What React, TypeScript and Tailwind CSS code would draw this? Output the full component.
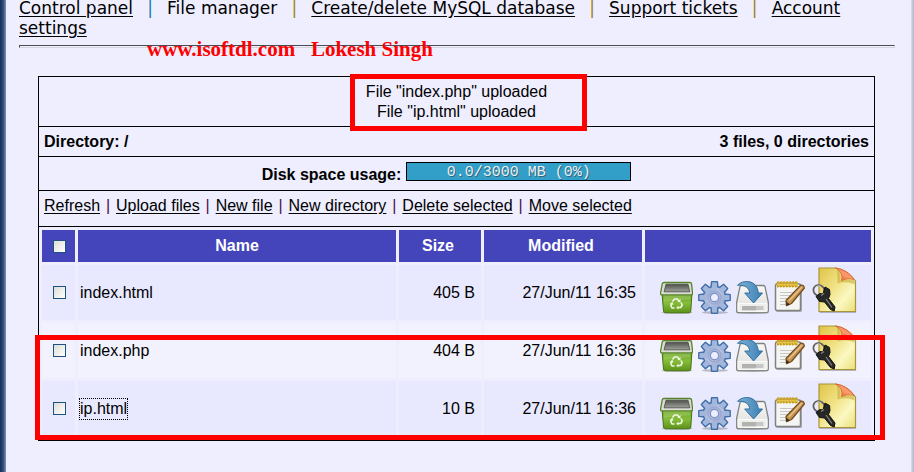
import React from "react";

function TrashIcon() {
  return (
    <svg viewBox="0 0 33 33" className="h-[33px] w-[33px]" aria-hidden="true">
      <defs>
        <linearGradient id="binBody" x1="0" y1="0" x2="0" y2="1">
          <stop offset="0" stopColor="#5f9a1c" />
          <stop offset="0.5" stopColor="#86bd3c" />
          <stop offset="1" stopColor="#5c9318" />
        </linearGradient>
        <linearGradient id="binInside" x1="0" y1="0" x2="0" y2="1">
          <stop offset="0" stopColor="#4d504b" />
          <stop offset="1" stopColor="#a0a39d" />
        </linearGradient>
      </defs>
      <ellipse cx="17" cy="31.5" rx="15.5" ry="1.3" fill="#555" opacity="0.35" />
      <path d="M2 12h30l-1.200 18q-.2 1.800-2 1.800H5.500q-1.800-.1-2-1.800z" fill="url(#binBody)" stroke="#467512" strokeWidth="1" />
      <path d="M4 1.500h26q1.200 0 1.500 1.200l1.100 9.600q0 1.600-1.500 1.600H2q-1.500 0-1.500-1.600L2.300 2.700Q2.700 1.500 4 1.500z" fill="#d9ddd3" stroke="#57832a" strokeWidth="1.300" />
      <path d="M6 3.200h22l1.800 7.600H4.100z" fill="url(#binInside)" stroke="#454941" strokeWidth="0.800" />
      <path d="M3.500 14.500h27l-.3 4Q17 18 3.800 21z" fill="#aed374" opacity="0.45" />
      <g fill="none" stroke="#eef7df" strokeWidth="1.600" strokeLinejoin="round">
        <path d="M12.500 20.500l2-2.500h3l1.500 2.500" />
        <path d="M21 21.500l1.200 2.500-1.500 2.500h-2.500" />
        <path d="M14.500 27h-2.500L10.800 24.500l1.200-2" />
      </g>
      <path d="M20.500 18v3.500l-3-1zM18.500 24.800v3.800l-2.400-1.900zM9.600 22.500l3-1.500.8 2.800z" fill="#eef7df" />
    </svg>
  );
}

function GearIcon() {
  const teeth = [0, 45, 90, 135, 180, 225, 270, 315];
  return (
    <svg viewBox="0 0 33 33" className="h-[33px] w-[33px]" aria-hidden="true">
      <defs>
        <linearGradient id="gearFill" x1="0" y1="0" x2="1" y2="1">
          <stop offset="0" stopColor="#86a5d4" />
          <stop offset="0.5" stopColor="#c2c8e2" />
          <stop offset="1" stopColor="#8b98c6" />
        </linearGradient>
      </defs>
      <ellipse cx="17" cy="31.500" rx="13" ry="1.300" fill="#555" opacity="0.35" />
      {teeth.map((a) => (
        <path key={a} d="M12.700 8L13.600 .800h5.800l.9 7.200z" fill="#9cb2d9" stroke="#416fa8" strokeWidth="1.400" strokeLinejoin="round" transform={`rotate(${a} 16.500 16.500)`} />
      ))}
      <circle cx="16.500" cy="16.500" r="11.200" fill="url(#gearFill)" stroke="#416fa8" strokeWidth="1.200" />
      {teeth.map((a) => (
        <path key={a} d="M13.700 8.500l.7-6.700h4.200l.7 6.700z" fill="#a3b6dc" transform={`rotate(${a} 16.500 16.500)`} />
      ))}
      <circle cx="16.500" cy="16.500" r="6.500" fill="none" stroke="#9aa9d2" strokeWidth="1.500" />
      <circle cx="16.500" cy="16.500" r="4.200" fill="#ededff" stroke="#7d95c6" strokeWidth="1.400" />
    </svg>
  );
}

function DownloadIcon() {
  return (
    <svg viewBox="0 0 33 33" className="h-[33px] w-[33px]" aria-hidden="true">
      <defs>
        <linearGradient id="driveTop" x1="0" y1="0" x2="0" y2="1">
          <stop offset="0" stopColor="#f8f8f7" />
          <stop offset="1" stopColor="#dcdddb" />
        </linearGradient>
        <linearGradient id="arrowFill" x1="0" y1="0" x2="1" y2="0">
          <stop offset="0" stopColor="#82b3d6" />
          <stop offset="1" stopColor="#3b7fb4" />
        </linearGradient>
      </defs>
      <ellipse cx="16.500" cy="31.800" rx="16" ry="1.100" fill="#555" opacity="0.4" />
      <path d="M5.500 4.500h22q1.200 0 1.500 1.200L32.300 21v9q0 1.700-1.700 1.700H2.400Q.7 31.700.7 30v-9L4 5.700q.3-1.200 1.500-1.200z" fill="url(#driveTop)" stroke="#80827e" strokeWidth="1.300" />
      <path d="M2 22.500h29v7.300q0 .8-.8.8H2.800q-.8 0-.8-.8z" fill="#eeeeed" stroke="#fff" strokeWidth="0.800" />
      <path d="M6 25h21.500v4H6z" fill="#c7c8c5" />
      <path d="M7 25v4.500M9 25v4.500M11 25v4.500M13 25v4.500M15 25v4.500M17 25v4.500M19 25v4.500" stroke="#969895" strokeWidth="0.900" />
      <path d="M1.500 4.300C6-1 21-2.500 22.300 12h4.200L17.600 22 8.700 12h5C13.300 7 9 3.500 1.500 4.300z" fill="url(#arrowFill)" stroke="#336f9f" strokeWidth="1" strokeLinejoin="round" />
    </svg>
  );
}

function EditIcon() {
  const rings = [4, 7, 10, 13, 16, 19, 22];
  return (
    <svg viewBox="0 0 33 33" className="h-[33px] w-[33px]" aria-hidden="true">
      <rect x="2" y="4" width="26" height="27" rx="1.500" fill="#555" opacity="0.4" />
      <rect x="1.500" y="3" width="25" height="26.500" rx="1.500" fill="#f5f5f3" stroke="#80827d" strokeWidth="1.500" />
      <path d="M6 11.500h16M6 14.500h16M6 17.500h16M6 20.500h11M6 23.500h8" stroke="#c6c7c4" strokeWidth="1.200" />
      {rings.map((x) => (
        <path key={x} d={`M${x} 6.500q-1.800-5 .2-5.600 1.800.2.600 5`} fill="none" stroke="#c99c10" strokeWidth="1.300" />
      ))}
      <path d="M3 3.500h21" stroke="#f0d04c" strokeWidth="1.500" opacity="0.800" />
      <path d="M12.500 24.800L12 19.500 26.500 4.300q3.300-1 3.900 2.700L17.500 22.500z" fill="#c49352" stroke="#734c1a" strokeWidth="1.200" strokeLinejoin="round" />
      <path d="M15 19.700L28 6" stroke="#e8c48c" strokeWidth="1.400" />
      <path d="M12.400 24.800l-.2-4.400 3.700 3.100z" fill="#3c2b19" />
    </svg>
  );
}

function PermissionIcon() {
  return (
    <svg viewBox="0 0 48 48" className="-ml-0.5 h-12 w-12" aria-hidden="true">
      <defs>
        <linearGradient id="sheet" x1="0" y1="0" x2="1" y2="1">
          <stop offset="0" stopColor="#dfc344" />
          <stop offset="0.450" stopColor="#f1e48a" />
          <stop offset="0.700" stopColor="#fbf8c2" />
          <stop offset="1" stopColor="#eadf78" />
        </linearGradient>
        <linearGradient id="sheetFold" x1="0" y1="1" x2="1" y2="0">
          <stop offset="0" stopColor="#e55419" />
          <stop offset="0.500" stopColor="#fa9d70" />
          <stop offset="1" stopColor="#e6602a" />
        </linearGradient>
      </defs>
      <path d="M9.500 3h18q12 3 18.500 13v31h-36.500z" fill="#444" opacity="0.350" />
      <path d="M9 2h17q11 2 19.500 13v30.500H9z" fill="url(#sheet)" stroke="#a9943a" strokeWidth="1.200" />
      <path d="M27 3q5 4 3 11.500 6-3 14.500 0v4q-8-4-17-1z" fill="#c8ad3a" opacity="0.600" />
      <path d="M25.500 2Q38 3.500 44 13.500q-6-2.500-12.500 1Q33.500 6 25.500 2z" fill="url(#sheetFold)" stroke="#d65a25" strokeWidth="0.700" />
      <ellipse cx="9" cy="24.500" rx="5.800" ry="5.200" fill="none" stroke="#5f605e" strokeWidth="1.800" transform="rotate(35 9 24.500)" />
      <path d="M5 21.500q3-3 6-1" fill="none" stroke="#d4d4d2" strokeWidth="0.900" />
      <path d="M15 21l4.500 2.500.5 5-1.500 4 6.500 8.500-.8 4-3.700-1.500-6-7.500-5-.5-3.500-5 4-3 3 .5z" fill="#262727" stroke="#111" strokeWidth="1" strokeLinejoin="round" />
      <path d="M11 29.500l3-2M16 33l6 8.500" stroke="#858684" strokeWidth="1.200" />
    </svg>
  );
}

const NAV = ["Control panel", "File manager", "Create/delete MySQL database", "Support tickets", "Account settings"];
const TOOLS = ["Refresh", "Upload files", "New file", "New directory", "Delete selected", "Move selected"];
const FILES = [
  { name: "index.html", size: "405 B", modified: "27/Jun/11 16:35", row: "bg-[#e8e8fe]", nameBox: "" },
  { name: "index.php", size: "404 B", modified: "27/Jun/11 16:36", row: "bg-[#f2f2ff]", nameBox: "" },
  { name: "ip.html", size: "10 B", modified: "27/Jun/11 16:36", row: "bg-[#e8e8fe]", nameBox: "outline-1 outline-dotted outline-black" },
];
const ACTIONS = [
  { label: "Delete", Icon: TrashIcon },
  { label: "Settings", Icon: GearIcon },
  { label: "Download", Icon: DownloadIcon },
  { label: "Edit", Icon: EditIcon },
  { label: "Permissions", Icon: PermissionIcon },
];

function Tick({ label }: { label: string }) {
  return (
    <input
      type="checkbox"
      aria-label={label}
      className="mx-auto block h-[13px] w-[13px] appearance-none border border-[#1c5180] bg-linear-to-br from-[#dcdcd7] to-white"
    />
  );
}

export default function App() {
  return (
    <div className="flex min-h-screen bg-[#eeeeff] font-['Liberation_Sans',Arial,sans-serif] text-base leading-5 text-black">
      <div className="w-1.5 shrink-0 bg-linear-to-r from-[#1b2f56] via-[#2c4877] to-[#7f93b8]" />
      <main className="min-w-0 flex-1 pr-4 pl-[13px]">
        <nav className="-mt-0.5 font-['DejaVu_Sans',Verdana,sans-serif] text-[17px] leading-5">
          {NAV.map((item, i) => (
            <React.Fragment key={item}>
              {i > 0 && (
                <span className={`inline-block w-[34px] text-center ${i === 1 ? "text-[#1080b0]" : "text-[#9c8420]"}`}>|</span>
              )}
              <a href="#" className={i === 1 ? "" : "underline underline-offset-2"}>
                {item}
              </a>
            </React.Fragment>
          ))}
        </nav>
        <div className="relative mt-[7px]">
          <hr className="h-[3px] border border-t-[#4b4b55] border-r-[#d5d5dd] border-b-[#d5d5dd] border-l-[#4b4b55]" />
          <p className="absolute -top-2 left-32 font-['Liberation_Serif','Times_New_Roman',serif] text-[21px] leading-6 font-bold whitespace-pre text-[#ff0000]">
            www.isoftdl.com{"   "}Lokesh Singh
          </p>
        </div>

        <section className="mt-7 mr-5 ml-[19px] divide-y divide-black border border-black">
          <div className="relative flex justify-center pt-[5px] pb-1 text-center">
            <p>
              File "index.php" uploaded
              <br />
              File "ip.html" uploaded
            </p>
            <div className="absolute -top-[3px] left-1/2 -ml-[107px] h-[57px] w-[237px] border-5 border-[#ff0000]" />
          </div>
          <div className="flex justify-between px-[5px] pt-[5px] pb-1 font-bold">
            <span>Directory: /</span>
            <span>3 files, 0 directories</span>
          </div>
          <div className="flex items-start justify-center gap-[5px] pt-[5px] pr-5 pb-[7px] font-bold">
            <span className="pt-[5px] leading-4">Disk space usage:</span>
            <div className="h-[19px] w-[225px] border border-black bg-[#329fc8] text-center font-['Liberation_Mono',monospace] text-[15px] leading-5 font-normal text-[#e4f1f6] text-shadow-[1px_1px_0_#3d5f70]">
              0.0/3000 MB (0%)
            </div>
          </div>
          <div className="px-[5px] pt-[5px] pb-[10px]">
            {TOOLS.map((item, i) => (
              <React.Fragment key={item}>
                {i > 0 && <span className="inline-block w-4 text-center text-[#4a1048]">|</span>}
                <a href="#" className="underline underline-offset-2">
                  {item}
                </a>
              </React.Fragment>
            ))}
          </div>
          <div className="relative pb-px">
            <table className="w-full table-fixed border-separate border-spacing-[3px]">
              <colgroup>
                <col className="w-[33px]" />
                <col />
                <col className="w-[82px]" />
                <col className="w-[158px]" />
                <col className="w-[226px]" />
              </colgroup>
              <thead>
                <tr className="h-8 bg-[#4444bb] text-white">
                  <th className="p-0 pl-0.5">
                    <Tick label="Select all" />
                  </th>
                  <th className="p-0">Name</th>
                  <th className="p-0 pr-1">Size</th>
                  <th className="p-0 pr-1">Modified</th>
                  <th className="p-0" aria-label="Actions" />
                </tr>
              </thead>
              <tbody>
                {FILES.map((f) => (
                  <tr key={f.name} className={`h-[55px] ${f.row}`}>
                    <td className="p-0 pl-0.5">
                      <Tick label={`Select ${f.name}`} />
                    </td>
                    <td className="p-0 pl-0.5">
                      <a href="#" className={`inline-block ${f.nameBox}`}>{f.name}</a>
                    </td>
                    <td className="p-0 pr-1.5 text-right">{f.size}</td>
                    <td className="p-0 pr-1.5 text-right">{f.modified}</td>
                    <td className="p-0 pl-0.5">
                      <div className="flex items-end justify-center gap-[5px] pb-1.5">
                        {ACTIONS.map(({ label, Icon }) => (
                          <button key={label} type="button" aria-label={`${label} ${f.name}`}>
                            <Icon />
                          </button>
                        ))}
                      </div>
                    </td>
                  </tr>
                ))}
              </tbody>
            </table>
            <div className="absolute -right-[11px] bottom-0 -left-1 h-[105px] border-5 border-[#ff0000]" />
          </div>
        </section>
      </main>
      <div className="w-[3px] shrink-0 bg-linear-to-r from-[#dcdcf0] to-[#a9b4cc]" />
    </div>
  );
}
